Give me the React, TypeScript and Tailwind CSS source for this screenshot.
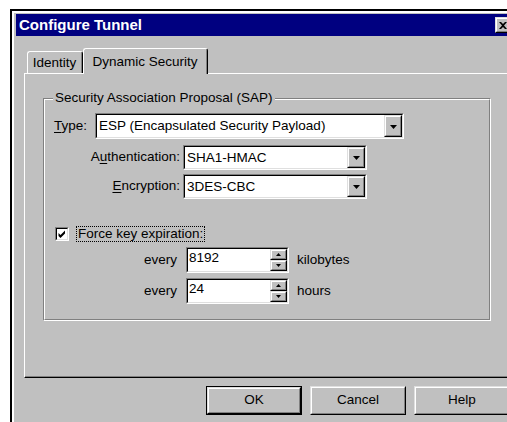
import type { ReactNode } from 'react';

function Sunken({ className, children }: { className: string; children?: ReactNode }) {
    return (
        <div className={`border border-t-[#808080] border-l-[#808080] border-r-white border-b-white ${className}`}>
            <div className="flex h-full w-full border border-t-black border-l-black border-r-[#dfdfdf] border-b-[#dfdfdf] bg-white">
                {children}
            </div>
        </div>
    );
}

function Raised({ className, children }: { className: string; children?: ReactNode }) {
    return (
        <div className={`border border-t-[#dfdfdf] border-l-[#dfdfdf] border-r-black border-b-black bg-[#c0c0c0] ${className}`}>
            <div className="flex h-full w-full items-center justify-center border border-t-white border-l-white border-r-[#808080] border-b-[#808080]">
                {children}
            </div>
        </div>
    );
}

function Combo({ value, className }: { value: string; className: string }) {
    return (
        <Sunken className={className}>
            <span className="flex flex-1 items-center pl-[2px] leading-none">{value}</span>
            <Raised className="h-full w-[18px]">
                <svg width="7" height="4" viewBox="0 0 7 4" className="mt-[1px]">
                    <path d="M0 0h7L3.5 4z" fill="#000" />
                </svg>
            </Raised>
        </Sunken>
    );
}

function Spin({ value }: { value: string }) {
    return (
        <Sunken className="h-[26px] w-[103px]">
            <span className="flex flex-1 items-start pl-[1px] pt-[2px] leading-none">{value}</span>
            <div className="flex w-[17px] flex-col">
                <Raised className="flex-1">
                    <svg width="5" height="3" viewBox="0 0 5 3">
                        <path d="M2.5 0L5 3H0z" fill="#000" />
                    </svg>
                </Raised>
                <Raised className="flex-1">
                    <svg width="5" height="3" viewBox="0 0 5 3">
                        <path d="M0 0h5L2.5 3z" fill="#000" />
                    </svg>
                </Raised>
            </div>
        </Sunken>
    );
}

function Button({ label, isDefault }: { label: string; isDefault?: boolean }) {
    if (isDefault) {
        return (
            <div className="h-[29px] w-[96px] border border-black">
                <Raised className="h-full w-full">{label}</Raised>
            </div>
        );
    }
    return <Raised className="h-[29px] w-[96px]">{label}</Raised>;
}

export default function App() {
    return (
        <div className="h-[422px] w-[507px] overflow-hidden bg-white pl-[10px] pt-[9px] font-['Liberation_Sans',Arial,sans-serif] text-[13.5px] text-black">
            <div className="h-[430px] w-[520px] border-l-2 border-t-2 border-black">
                <div className="h-full border-l-2 border-t-2 border-white bg-[#c0c0c0] pl-[2px] pt-[1px]">
                    {/* title bar */}
                    <div className="flex h-[22px] w-[497px] items-center justify-between bg-[#000080] pl-[3px] pr-[2px]">
                        <span className="text-[15px] font-bold text-white">Configure Tunnel</span>
                        <Raised className="h-[16px] w-[16px]">
                            <svg width="8" height="7" viewBox="0 0 8 7">
                                <path d="M0 0h2l2 2 2-2h2L5 3.5 8 7H6L4 5 2 7H0l3-3.5z" fill="#000" />
                            </svg>
                        </Raised>
                    </div>

                    <div className="ml-[8px] mt-[12px] w-[492px]">
                        {/* tabs */}
                        <div className="flex h-[25px] items-end pl-[3px]">
                            <div className="flex h-[22px] w-[56px] items-center justify-center rounded-t-[3px] border-l border-t border-r border-l-white border-t-white border-r-black">
                                <div className="flex h-full w-full items-center justify-center border-r border-[#808080] pt-[1px]">
                                    Identity
                                </div>
                            </div>
                            <div className="relative z-10 -mb-[1px] flex h-[26px] w-[125px] rounded-t-[3px] border-l border-t border-r border-l-white border-t-white border-r-black bg-[#c0c0c0]">
                                <div className="flex h-full w-full items-start justify-center border-r border-[#808080] pt-[3px]">
                                    Dynamic Security
                                </div>
                            </div>
                        </div>

                        {/* tab panel */}
                        <div className="h-[305px] border border-t-white border-l-white border-r-black border-b-black">
                            <div className="h-full border-r border-b border-[#808080] pl-[18px] pt-[24px]">
                                <div className="relative h-[223px] w-[448px] border border-t-[#808080] border-l-[#808080] border-r-white border-b-white">
                                    <span className="absolute -top-[9px] left-[9px] bg-[#c0c0c0] px-[2px] leading-[16px]">
                                        Security Association Proposal (SAP)
                                    </span>
                                    <div className="h-full border border-t-white border-l-white border-r-[#808080] border-b-[#808080]">
                                        <div className="mt-[13px] flex items-center pl-[9px]">
                                            <span className="w-[41px]">
                                                <u className="underline-offset-2">T</u>ype:
                                            </span>
                                            <Combo value="ESP (Encapsulated Security Payload)" className="h-[26px] w-[309px]" />
                                        </div>
                                        <div className="mt-[6px] flex items-center">
                                            <span className="w-[138px] pr-[3px] text-right">
                                                A<u className="underline-offset-2">u</u>thentication:
                                            </span>
                                            <Combo value="SHA1-HMAC" className="h-[25px] w-[184px]" />
                                        </div>
                                        <div className="mt-[4px] flex items-center">
                                            <span className="w-[138px] pr-[3px] text-right">
                                                <u className="underline-offset-2">E</u>ncryption:
                                            </span>
                                            <Combo value="3DES-CBC" className="h-[25px] w-[184px]" />
                                        </div>

                                        <div className="mt-[27px] flex h-[16px] items-center pl-[10px]">
                                            <Sunken className="h-[14px] w-[14px]">
                                                <svg width="10" height="10" viewBox="0 0 10 10">
                                                    <path d="M1.5 4l2 2 4.5-4.5v3L3.5 9 1.5 7z" fill="#000" />
                                                </svg>
                                            </Sunken>
                                            <span className="ml-[7px] border border-dotted border-black px-[1px] leading-[14px]">
                                                Force key expiration:
                                            </span>
                                        </div>

                                        <div className="mt-[5px] flex items-center">
                                            <span className="w-[141px] pr-[9px] text-right">every</span>
                                            <Spin value="8192" />
                                            <span className="ml-[8px]">kilobytes</span>
                                        </div>
                                        <div className="mt-[5px] flex items-center">
                                            <span className="w-[141px] pr-[9px] text-right">every</span>
                                            <Spin value="24" />
                                            <span className="ml-[8px]">hours</span>
                                        </div>
                                    </div>
                                </div>
                            </div>
                        </div>
                    </div>

                    {/* dialog buttons */}
                    <div className="ml-[190px] mt-[8px] flex gap-2">
                        <Button label="OK" isDefault />
                        <Button label="Cancel" />
                        <Button label="Help" />
                    </div>
                </div>
            </div>
        </div>
    );
}
